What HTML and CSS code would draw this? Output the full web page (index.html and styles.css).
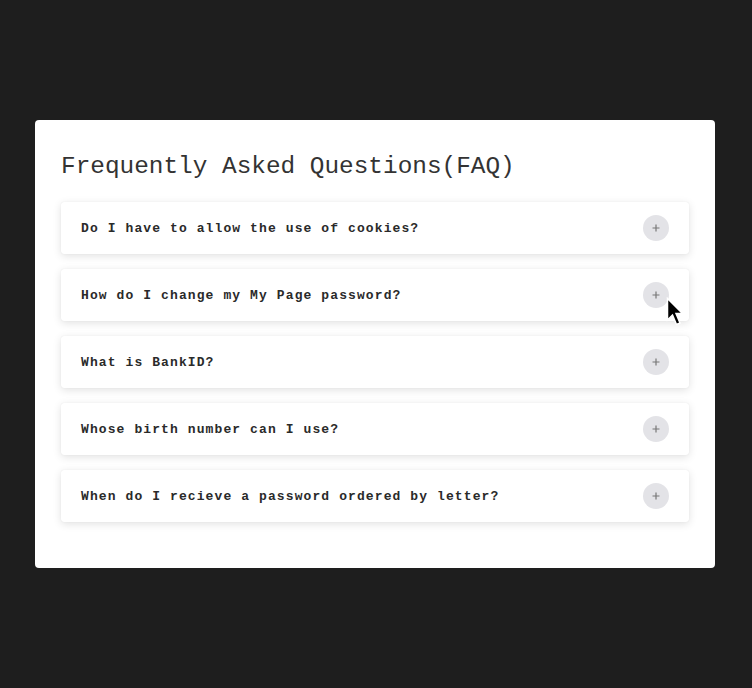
FILE: index.html
```html
<!DOCTYPE html>
<html>
<head>
<meta charset="utf-8">
<link rel="stylesheet" href="styles.css">
</head>
<body>
<div class="page">
  <div class="card">
    <h1 class="title">Frequently Asked Questions(FAQ)</h1>
    <div class="list">
      <div class="item"><span class="q">Do I have to allow the use of cookies?</span><span class="btn"><svg width="8" height="8" viewBox="0 0 8 8"><path d="M4 0.5V7.5M0.5 4H7.5" stroke="#777" stroke-width="1.2"/></svg></span></div>
      <div class="item"><span class="q">How do I change my My Page password?</span><span class="btn"><svg width="8" height="8" viewBox="0 0 8 8"><path d="M4 0.5V7.5M0.5 4H7.5" stroke="#777" stroke-width="1.2"/></svg></span></div>
      <div class="item"><span class="q">What is BankID?</span><span class="btn"><svg width="8" height="8" viewBox="0 0 8 8"><path d="M4 0.5V7.5M0.5 4H7.5" stroke="#777" stroke-width="1.2"/></svg></span></div>
      <div class="item"><span class="q">Whose birth number can I use?</span><span class="btn"><svg width="8" height="8" viewBox="0 0 8 8"><path d="M4 0.5V7.5M0.5 4H7.5" stroke="#777" stroke-width="1.2"/></svg></span></div>
      <div class="item"><span class="q">When do I recieve a password ordered by letter?</span><span class="btn"><svg width="8" height="8" viewBox="0 0 8 8"><path d="M4 0.5V7.5M0.5 4H7.5" stroke="#777" stroke-width="1.2"/></svg></span></div>
    </div>
  </div>
</div>
<svg class="cursor" width="19" height="30" viewBox="0 0 19 30">
  <path d="M1.5 1.5 L1.5 23 L6.5 18 L10.5 27.5 L14 26 L10 16.5 L16.5 16.5 Z" fill="#000" stroke="#fff" stroke-width="1.5" stroke-linejoin="miter"/>
</svg>
</body>
</html>
```
FILE: styles.css
```css
html, body {
  margin: 0;
  padding: 0;
  background: #1e1e1e;
  width: 752px;
  height: 688px;
  overflow: hidden;
}
.page {
  padding: 120px 37px 0 35px;
}
.card {
  background: #fff;
  border-radius: 4px;
  width: 680px;
  height: 448px;
  box-sizing: border-box;
  padding: 30px 26px 0 26px;
}
.title {
  margin: 0 0 18px 0;
  font-family: "Liberation Mono", "Courier New", monospace;
  font-weight: normal;
  font-size: 24.4px;
  line-height: 34px;
  color: #333;
}
.list {
  display: flex;
  flex-direction: column;
  gap: 15px;
}
.item {
  height: 52px;
  display: flex;
  align-items: center;
  justify-content: space-between;
  padding: 0 20px 0 20px;
  background: #fff;
  border-radius: 3px;
  box-shadow: 0 2px 8px rgba(0,0,0,0.12), 0 0 1px rgba(0,0,0,0.1);
}
.q {
  font-family: "Liberation Mono", "Courier New", monospace;
  font-weight: bold;
  font-size: 13px;
  letter-spacing: 1.1px;
  color: #2a2a2a;
}
.btn {
  width: 26px;
  height: 26px;
  border-radius: 50%;
  background: #e3e3e7;
  display: flex;
  align-items: center;
  justify-content: center;
}
.cursor {
  position: absolute;
  left: 666px;
  top: 297px;
}
```
